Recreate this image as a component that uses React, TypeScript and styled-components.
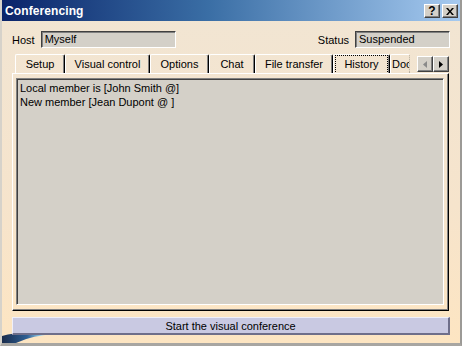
import * as React from 'react';
import styled, { createGlobalStyle } from 'styled-components';

const GlobalStyle = createGlobalStyle`
    html, body {
        margin: 0;
        padding: 0;
        background: #ffffff;
    }
    body {
        font-family: "Liberation Sans", Arial, sans-serif;
        font-size: 11px;
        color: #000;
    }
`;

interface ITab {
    label: string;
    width: number;
}

const tabs: ITab[] = [
    { label: 'Setup', width: 50 },
    { label: 'Visual control', width: 85 },
    { label: 'Options', width: 59 },
    { label: 'Chat', width: 46 },
    { label: 'File transfer', width: 78 },
    { label: 'History', width: 57 },
    { label: 'Doc', width: 20 }
];

const history = [
    'Local member is [John Smith @]',
    'New member [Jean Dupont @ ]'
];

export default class App extends React.Component<{}, any> {
    constructor(props) {
        super(props);
        this.state = {
            active: 'History'
        };
    }
    public selectTab = (label: string) => {
        this.setState({ active: label });
    }
    public render(): JSX.Element {
        const { active } = this.state;
        return (
            <>
                <GlobalStyle />
                <Window>
                    <TitleBar>
                        <Title>Conferencing</Title>
                        <TitleButtons>
                            <CaptionButton>?</CaptionButton>
                            <CaptionButton>
                                <svg width="8" height="7" viewBox="0 0 8 7">
                                    <path d="M0 0h2l2 2.5L6 0h2L5 3.5 8 7H6L4 4.5 2 7H0l3-3.5z" fill="#000" />
                                </svg>
                            </CaptionButton>
                        </TitleButtons>
                    </TitleBar>
                    <Body>
                        <Swoosh width="56" height="16" viewBox="0 0 56 16">
                            <defs>
                                <linearGradient id="sw" x1="0" y1="0" x2="1" y2="0">
                                    <stop offset="0" stopColor="#1a2c4c" />
                                    <stop offset="0.45" stopColor="#2f5f94" />
                                    <stop offset="0.7" stopColor="#9ad2ee" />
                                    <stop offset="1" stopColor="#fde5c2" stopOpacity="0" />
                                </linearGradient>
                            </defs>
                            <path d="M0 16 L0 9 Q18 3 56 7 Q30 8 14 16 Z" fill="url(#sw)" />
                        </Swoosh>
                        <FieldRow>
                            <FieldGroup>
                                <Label>Host</Label>
                                <Field width={135}>Myself</Field>
                            </FieldGroup>
                            <FieldGroup>
                                <Label>Status</Label>
                                <Field width={95}>Suspended</Field>
                            </FieldGroup>
                        </FieldRow>
                        <TabStrip>
                            <TabList>
                                {tabs.map(tab => (
                                    <Tab
                                        key={tab.label}
                                        width={tab.width}
                                        clipped={tab.label === 'Doc'}
                                        onClick={() => this.selectTab(tab.label)}
                                    >
                                        <TabText selected={tab.label === active}>{tab.label}</TabText>
                                    </Tab>
                                ))}
                            </TabList>
                            <Scroller>
                                <ArrowButton>
                                    <svg width="4" height="7" viewBox="0 0 4 7">
                                        <path d="M4 0v7L0 3.5z" fill="#8a8a8a" />
                                    </svg>
                                </ArrowButton>
                                <ArrowButton>
                                    <svg width="4" height="7" viewBox="0 0 4 7">
                                        <path d="M0 0v7l4-3.5z" fill="#000" />
                                    </svg>
                                </ArrowButton>
                            </Scroller>
                        </TabStrip>
                        <Page>
                            <Log>
                                {history.map(line => (
                                    <LogLine key={line}>{line}</LogLine>
                                ))}
                            </Log>
                        </Page>
                        <StartButton>Start the visual conference</StartButton>
                    </Body>
                </Window>
            </>
        );
    }
}

const Window = styled.div`
    width: 462px;
    height: 346px;
    box-sizing: border-box;
    display: flex;
    flex-direction: column;
    border-left: 2px solid #d6d2ca;
    border-right: 2px solid #9c9a96;
    border-bottom: 3px solid #a8a6a2;
    background: linear-gradient(to bottom, #f1e5d3 0%, #f6e4cc 60%, #fde5c2 100%);
    overflow: hidden;
`;

const TitleBar = styled.div`
    height: 21px;
    flex: none;
    display: flex;
    align-items: center;
    justify-content: space-between;
    padding: 0 2px 0 3px;
    background: linear-gradient(to right, #0a246a 0%, #3a6ea5 45%, #a6caf0 100%);
`;

const Title = styled.div`
    color: #fff;
    font-weight: bold;
    font-size: 12px;
    letter-spacing: 0.1px;
`;

const TitleButtons = styled.div`
    display: flex;
    gap: 2px;
    margin-top: 1px;
`;

const CaptionButton = styled.div`
    width: 16px;
    height: 14px;
    box-sizing: border-box;
    background: #d4d0c8;
    border-top: 1px solid #fff;
    border-left: 1px solid #fff;
    border-right: 1px solid #404040;
    border-bottom: 1px solid #404040;
    box-shadow: inset -1px -1px 0 #808080;
    display: flex;
    align-items: center;
    justify-content: center;
    font-weight: bold;
    font-size: 12px;
    line-height: 12px;
`;

const Body = styled.div`
    position: relative;
    flex: 1;
    display: flex;
    flex-direction: column;
    padding: 10px 9px 0 10px;
`;

const Swoosh = styled.svg`
    position: absolute;
    left: 0;
    bottom: 0;
`;

const FieldRow = styled.div`
    display: flex;
    justify-content: space-between;
    height: 17px;
    margin-right: 1px;
`;

const FieldGroup = styled.div`
    display: flex;
    align-items: center;
    gap: 6px;
`;

const Label = styled.span`
    font-size: 11px;
`;

const Field = styled.div<{ width: number }>`
    width: ${props => props.width}px;
    height: 17px;
    box-sizing: border-box;
    background: #d4d0c8;
    border-top: 1px solid #404040;
    border-left: 1px solid #404040;
    border-right: 1px solid #fff;
    border-bottom: 1px solid #fff;
    box-shadow: inset 1px 1px 0 #808080;
    padding: 1px 3px;
    line-height: 13px;
    font-size: 11px;
`;

const TabStrip = styled.div`
    display: flex;
    align-items: flex-end;
    justify-content: space-between;
    margin-top: 6px;
    padding-left: 3px;
    height: 19px;
`;

const TabList = styled.div`
    display: flex;
    height: 19px;
`;

const Tab = styled.div<{ width: number; clipped?: boolean }>`
    width: ${props => props.width}px;
    height: 19px;
    box-sizing: border-box;
    border-top: 1px solid #fff;
    border-left: 1px solid #fff;
    border-right: ${props => (props.clipped ? '1px dotted #b0a898' : '1px solid #000')};
    box-shadow: ${props => (props.clipped ? 'none' : 'inset -1px 0 0 #808080')};
    border-radius: 2px 2px 0 0;
    display: flex;
    align-items: center;
    justify-content: ${props => (props.clipped ? 'flex-start' : 'center')};
    padding: 0 ${props => (props.clipped ? '1px' : '2px')};
    overflow: hidden;
    white-space: nowrap;
    font-size: 11px;
    cursor: default;
`;

const TabText = styled.span<{ selected?: boolean }>`
    display: flex;
    align-items: center;
    height: 17px;
    padding: 0 ${props => (props.selected ? '8px' : '0')};
    outline: ${props => (props.selected ? '1px dotted #000' : 'none')};
    outline-offset: 0;
`;

const Scroller = styled.div`
    display: flex;
    margin-bottom: 1px;
    margin-right: 2px;
`;

const ArrowButton = styled.div`
    width: 16px;
    height: 16px;
    box-sizing: border-box;
    background: #d4d0c8;
    border-top: 1px solid #fff;
    border-left: 1px solid #fff;
    border-right: 1px solid #404040;
    border-bottom: 1px solid #404040;
    box-shadow: inset -1px -1px 0 #808080;
    display: flex;
    align-items: center;
    justify-content: center;
`;

const Page = styled.div`
    position: relative;
    height: 238px;
    box-sizing: border-box;
    border-top: 1px solid #fff;
    border-left: 1px solid #fff;
    border-right: 1px solid #000;
    border-bottom: 1px solid #000;
    box-shadow: inset -1px -1px 0 #808080;
    padding: 4px 4px 5px 3px;
    display: flex;
    margin-right: 2px;
`;

const Log = styled.div`
    flex: 1;
    box-sizing: border-box;
    background: #d4d0c8;
    border-top: 1px solid #808080;
    border-left: 1px solid #808080;
    border-right: 1px solid #fff;
    border-bottom: 1px solid #fff;
    box-shadow: inset 1px 1px 0 #404040;
    padding: 2px 3px;
`;

const LogLine = styled.div`
    line-height: 14px;
    font-size: 11px;
`;

const StartButton = styled.button`
    position: relative;
    margin-top: 6px;
    height: 18px;
    width: 438px;
    box-sizing: border-box;
    padding: 0;
    background: #c9c9e2;
    border: none;
    border-top: 1px solid #f0f0fa;
    border-left: 1px solid #f0f0fa;
    border-right: 2px solid #6e6e8a;
    border-bottom: 2px solid #6e6e8a;
    font-family: "Liberation Sans", Arial, sans-serif;
    font-size: 11px;
    color: #000;
    line-height: 14px;
    cursor: pointer;
`;
